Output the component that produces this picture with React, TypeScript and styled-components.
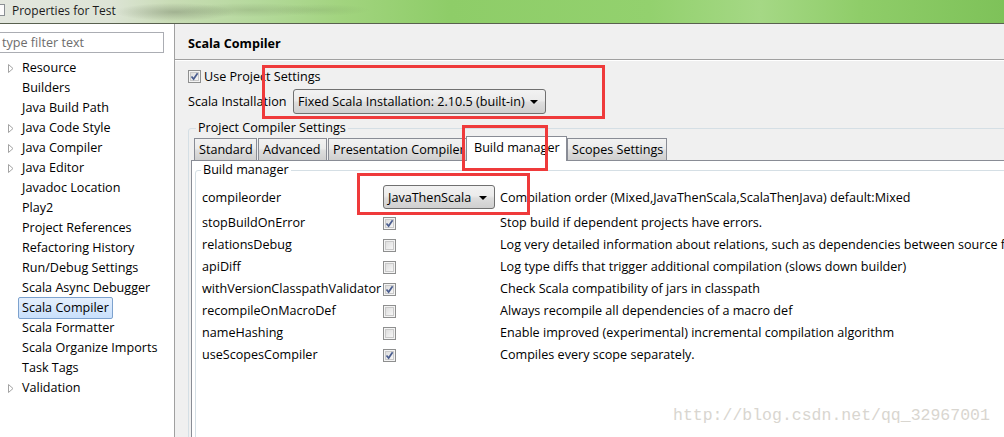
import React from "react";
import styled, { createGlobalStyle } from "styled-components";

const GlobalStyle = createGlobalStyle`
  html, body { margin: 0; padding: 0; background: #f0f0f0; }
  body {
    font-family: "Open Sans", "Noto Sans", Arial, sans-serif;
    font-size: 12.6px;
    color: #000;
  }
  * { box-sizing: border-box; }
`;

const Window = styled.div`
  position: relative;
  width: 1004px;
  height: 437px;
  overflow: hidden;
  display: flex;
  flex-direction: column;
  background: #f0f0f0;
`;

const TitleBar = styled.div`
  flex: none;
  height: 24px;
  display: flex;
  align-items: center;
  gap: 7px;
  padding-bottom: 3px;
  border-bottom: 1px solid #59614f;
  background:
    radial-gradient(ellipse 60px 9px at 175px 12px, rgba(90, 100, 80, 0.35), transparent),
    radial-gradient(ellipse 70px 7px at 250px 10px, rgba(110, 130, 90, 0.25), transparent),
    radial-gradient(ellipse 50px 6px at 320px 10px, rgba(110, 140, 90, 0.2), transparent),
    linear-gradient(90deg, #e3e7df 0px, #dde4d6 110px, #c9dcb6 170px, #b4d99b 260px,
      #a2d47f 340px, #8ecd68 450px, #93d16e 650px, #a5d885 760px, #8fcd69 860px, #7ec259 1004px);
`;

const TitleIcon = styled.span`
  width: 11px;
  height: 12px;
  margin-left: -6px;
  background: #fbfbfb;
  border: 1px solid #8a8f94;
`;

const TitleText = styled.span`
  font-family: "Open Sans", "Noto Sans", sans-serif;
  font-size: 12px;
  color: #1b1b1b;
`;

const Body = styled.div`
  flex: 1;
  min-height: 0;
  display: flex;
`;

const Sidebar = styled.div`
  flex: none;
  width: 175px;
  background: #fff;
  border-right: 1px solid #a0a0a0;
  padding-top: 8px;
`;

const FilterBox = styled.div`
  width: 165px;
  height: 21px;
  margin-left: -1px;
  border: 1px solid #abadb3;
  padding-left: 2px;
  line-height: 19px;
  color: #6d6d6d;
`;

const Tree = styled.div`
  margin-top: 5px;
  display: flex;
  flex-direction: column;
`;

const TreeRow = styled.div`
  height: 20px;
  display: flex;
  align-items: center;
  padding-left: 8px;
`;

const Twisty = styled.span`
  width: 10px;
  height: 20px;
  display: flex;
  align-items: center;
`;

const TreeLabel = styled.span<{ $selected?: boolean }>`
  height: 22px;
  line-height: 20px;
  padding: 0 3px;
  border: 1px solid ${(p) => (p.$selected ? "#7da2ce" : "transparent")};
  border-radius: 2px;
  background: ${(p) => (p.$selected ? "linear-gradient(#e4effd, #c9e0fc)" : "transparent")};
  white-space: nowrap;
`;

const Main = styled.div`
  flex: 1;
  min-width: 0;
  display: flex;
  flex-direction: column;
  overflow: hidden;
  background: #f0f0f0;
`;

const PageHeader = styled.div`
  flex: none;
  padding: 11px 0 6px 13px;
  line-height: 18px;
  font-weight: bold;
  border-bottom: 1px solid #a0a0a0;
  box-shadow: 0 1px 0 #fff;
`;

const Content = styled.div`
  flex: 1;
  display: flex;
  flex-direction: column;
  padding: 6px 0 0 13px;
`;

const CheckRow = styled.label`
  height: 20px;
  display: flex;
  align-items: center;
  gap: 3px;
`;

const InstallRow = styled.div`
  margin-top: 3px;
  height: 25px;
  display: flex;
  align-items: center;
`;

const FieldLabel = styled.span<{ $width: number }>`
  width: ${(p) => p.$width}px;
  flex: none;
`;

const Combo = styled.div<{ $width: number; $height: number }>`
  width: ${(p) => p.$width}px;
  height: ${(p) => p.$height}px;
  flex: none;
  display: flex;
  align-items: center;
  justify-content: space-between;
  padding: 0 7px 0 4px;
  border: 1px solid #707070;
  border-radius: 3px;
  background: linear-gradient(#f2f2f2 0%, #ebebeb 45%, #dddddd 55%, #cfcfcf 100%);
  white-space: nowrap;
`;

const ComboArrow = styled.span`
  width: 0;
  height: 0;
  border-left: 4px solid transparent;
  border-right: 4px solid transparent;
  border-top: 4px solid #000;
  margin-top: 1px;
`;

const Group = styled.fieldset<{ $pad: number }>`
  margin: 0;
  min-width: 0;
  border: 1px solid #d5dfe5;
  border-radius: 3px;
  padding: 0 0 0 ${(p) => p.$pad}px;
  flex: 1;
  display: flex;
  flex-direction: column;
  margin-right: -30px;
  margin-bottom: -20px;
`;

const OuterGroup = styled(Group)`
  margin-top: 6px;
`;

const Legend = styled.legend<{ $offset: number }>`
  margin-left: ${(p) => p.$offset}px;
  padding: 0 2px;
  line-height: 16px;
`;

const TabBar = styled.div`
  position: relative;
  z-index: 1;
  height: 24px;
  display: flex;
  align-items: flex-start;
  padding-left: 3px;
`;

const Tab = styled.div<{ $width: number; $active?: boolean }>`
  width: ${(p) => p.$width}px;
  height: ${(p) => (p.$active ? 25 : 22)}px;
  margin-top: ${(p) => (p.$active ? 0 : 2)}px;
  margin-left: ${(p) => (p.$active ? -3 : 0)}px;
  margin-right: ${(p) => (p.$active ? 0 : 1)}px;
  position: relative;
  z-index: ${(p) => (p.$active ? 2 : 1)};
  padding: 1px 0 0 ${(p) => (p.$active ? 7 : 4)}px;
  line-height: 19px;
  border: 1px solid #898c95;
  border-bottom: none;
  background: ${(p) =>
    p.$active ? "#fff" : "linear-gradient(#f2f2f2 0%, #ebebeb 45%, #dddddd 55%, #cfcfcf 100%)"};
  white-space: nowrap;
  overflow: hidden;
`;

const TabPanel = styled.div`
  flex: 1;
  display: flex;
  flex-direction: column;
  background: #fff;
  border: 1px solid #898c95;
  padding: 1px 0 0 3px;
`;

const SettingsGrid = styled.div`
  display: grid;
  grid-template-columns: 181px 117px max-content;
  grid-template-rows: 28px;
  grid-auto-rows: 22px;
  align-items: center;
  padding-top: 5px;
  white-space: nowrap;
`;

const BoxWrap = styled.span`
  width: 13px;
  height: 13px;
  flex: none;
  display: inline-flex;
  align-items: center;
  justify-content: center;
  vertical-align: middle;
  border: 1px solid #8e8f8f;
  box-shadow: inset 0 0 0 1px #f4f4f4, inset 0 0 0 2px #c9c9c9;
  background-image: linear-gradient(135deg, #d7d7d7, #fdfdfd);
`;

const Annotation = styled.div<{ $x: number; $y: number; $w: number; $h: number }>`
  position: absolute;
  left: ${(p) => p.$x}px;
  top: ${(p) => p.$y}px;
  width: ${(p) => p.$w}px;
  height: ${(p) => p.$h}px;
  border: 3px solid #ef3a3b;
  pointer-events: none;
  z-index: 5;
`;

const Watermark = styled.div`
  position: absolute;
  left: 673px;
  top: 406px;
  font-family: "Liberation Mono", "DejaVu Sans Mono", monospace;
  font-size: 16.5px;
  line-height: 20px;
  color: #d9d6d0;
  z-index: 4;
`;

const Checkbox: React.FC<{ checked?: boolean }> = ({ checked }) => (
  <BoxWrap>
    {checked && (
      <svg width="9" height="9" viewBox="0 0 9 9">
        <path d="M1.5 4.5 L3.6 7 L7.6 1.2" fill="none" stroke="#4a5d8f" strokeWidth="1.7" />
      </svg>
    )}
  </BoxWrap>
);

const TwistyIcon = () => (
  <svg width="6" height="9" viewBox="0 0 6 9">
    <path d="M0.5 0.5 L5 4.5 L0.5 8.5 Z" fill="#fff" stroke="#a3a3a3" strokeWidth="1" />
  </svg>
);

const treeItems: { label: string; twisty?: boolean; selected?: boolean }[] = [
  { label: "Resource", twisty: true },
  { label: "Builders" },
  { label: "Java Build Path" },
  { label: "Java Code Style", twisty: true },
  { label: "Java Compiler", twisty: true },
  { label: "Java Editor", twisty: true },
  { label: "Javadoc Location" },
  { label: "Play2" },
  { label: "Project References" },
  { label: "Refactoring History" },
  { label: "Run/Debug Settings" },
  { label: "Scala Async Debugger" },
  { label: "Scala Compiler", selected: true },
  { label: "Scala Formatter" },
  { label: "Scala Organize Imports" },
  { label: "Task Tags" },
  { label: "Validation", twisty: true },
];

const tabs = [
  { label: "Standard", width: 63 },
  { label: "Advanced", width: 69 },
  { label: "Presentation Compiler", width: 140 },
  { label: "Build manager", width: 101, active: true },
  { label: "Scopes Settings", width: 100 },
];

const settings: { name: string; checked: boolean; desc: string }[] = [
  { name: "stopBuildOnError", checked: true, desc: "Stop build if dependent projects have errors." },
  {
    name: "relationsDebug",
    checked: false,
    desc: "Log very detailed information about relations, such as dependencies between source files.",
  },
  { name: "apiDiff", checked: false, desc: "Log type diffs that trigger additional compilation (slows down builder)" },
  { name: "withVersionClasspathValidator", checked: true, desc: "Check Scala compatibility of jars in classpath" },
  { name: "recompileOnMacroDef", checked: false, desc: "Always recompile all dependencies of a macro def" },
  { name: "nameHashing", checked: false, desc: "Enable improved (experimental) incremental compilation algorithm" },
  { name: "useScopesCompiler", checked: true, desc: "Compiles every scope separately." },
];

export default function App() {
  return (
    <>
      <GlobalStyle />
      <Window>
        <TitleBar>
          <TitleIcon />
          <TitleText>Properties for Test</TitleText>
        </TitleBar>
        <Body>
          <Sidebar>
            <FilterBox>type filter text</FilterBox>
            <Tree>
              {treeItems.map((it) => (
                <TreeRow key={it.label}>
                  <Twisty>{it.twisty && <TwistyIcon />}</Twisty>
                  <TreeLabel $selected={it.selected}>{it.label}</TreeLabel>
                </TreeRow>
              ))}
            </Tree>
          </Sidebar>
          <Main>
            <PageHeader>Scala Compiler</PageHeader>
            <Content>
              <CheckRow>
                <Checkbox checked />
                Use Project Settings
              </CheckRow>
              <InstallRow>
                <FieldLabel $width={105}>Scala Installation</FieldLabel>
                <Combo $width={253} $height={25}>
                  Fixed Scala Installation: 2.10.5 (built-in)
                  <ComboArrow />
                </Combo>
              </InstallRow>
              <OuterGroup $pad={2}>
                <Legend $offset={5}>Project Compiler Settings</Legend>
                <TabBar>
                  {tabs.map((t) => (
                    <Tab key={t.label} $width={t.width} $active={t.active}>
                      {t.label}
                    </Tab>
                  ))}
                </TabBar>
                <TabPanel>
                  <Group $pad={6}>
                    <Legend $offset={-1}>Build manager</Legend>
                    <SettingsGrid>
                      <span>compileorder</span>
                      <Combo $width={112} $height={24}>
                        JavaThenScala
                        <ComboArrow />
                      </Combo>
                      <span>Compilation order (Mixed,JavaThenScala,ScalaThenJava) default:Mixed</span>
                      {settings.map((s) => (
                        <React.Fragment key={s.name}>
                          <span>{s.name}</span>
                          <span>
                            <Checkbox checked={s.checked} />
                          </span>
                          <span>{s.desc}</span>
                        </React.Fragment>
                      ))}
                    </SettingsGrid>
                  </Group>
                </TabPanel>
              </OuterGroup>
            </Content>
          </Main>
        </Body>
        <Annotation $x={262} $y={65} $w={343} $h={54} />
        <Annotation $x={462} $y={125} $w={86} $h={46} />
        <Annotation $x={357} $y={173} $w={173} $h={42} />
        <Watermark>http://blog.csdn.net/qq_32967001</Watermark>
      </Window>
    </>
  );
}
